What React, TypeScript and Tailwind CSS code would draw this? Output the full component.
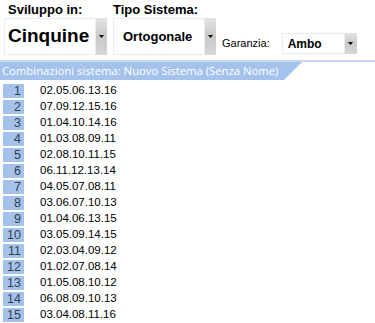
const combos = [
  '02.05.06.13.16',
  '07.09.12.15.16',
  '01.04.10.14.16',
  '01.03.08.09.11',
  '02.08.10.11.15',
  '06.11.12.13.14',
  '04.05.07.08.11',
  '03.06.07.10.13',
  '01.04.06.13.15',
  '03.05.09.14.15',
  '02.03.04.09.12',
  '01.02.07.08.14',
  '01.05.08.10.12',
  '06.08.09.10.13',
  '03.04.08.11.16',
]

function DropButton({ className }: { className: string }) {
  return (
    <div
      className={`flex items-center justify-center bg-gradient-to-b from-[#e4e4e4] via-[#c9c9c9] to-[#d6d6d6] ${className}`}
    >
      <svg width="5" height="3" viewBox="0 0 5 3">
        <path d="M0 0h5L2.5 3z" fill="#000" />
      </svg>
    </div>
  )
}

export default function App() {
  return (
    <div className="h-[323px] w-[375px] overflow-hidden bg-white font-['Liberation_Sans',Arial,sans-serif] text-black">
      <div className="flex h-[60px] pt-[1px]">
        <div className="flex w-[113px] flex-col">
          <div className="h-[17px] pl-[8px] text-[13px] font-bold leading-[17px]">Sviluppo in:</div>
          <div className="flex h-[37px] pl-[4px]">
            <div className="flex w-[92px] items-center border border-[#ececec] pl-[3px] text-[19px] font-bold">
              Cinquine
            </div>
            <DropButton className="w-[11px]" />
          </div>
        </div>
        <div className="flex w-[106px] flex-col">
          <div className="h-[17px] text-[13px] font-bold leading-[17px]">Tipo Sistema:</div>
          <div className="flex h-[37px]">
            <div className="flex w-[92px] items-center border border-[#ececec] pl-[9px] text-[13px] font-bold">
              Ortogonale
            </div>
            <DropButton className="w-[11px]" />
          </div>
        </div>
        <div className="flex items-end pb-[6px]">
          <div className="flex h-[21px] items-center pl-[3px] text-[11px]">Garanzia:</div>
          <div className="ml-[12px] flex h-[21px] w-[63px] items-center border border-[#ececec] pl-[5px] text-[12px] font-bold">
            Ambo
          </div>
          <DropButton className="h-[21px] w-[12px]" />
        </div>
      </div>
      <div className="h-[2px] bg-[#c6d8f0]" />
      <div className="relative h-[18px] w-[302px] bg-[#a4c2ec] [clip-path:polygon(0_0,100%_0,calc(100%-18px)_100%,0_100%)]">
        <div className="pl-[2px] font-['Open_Sans',sans-serif] text-[11.3px] leading-[18px] text-white">
          Combinazioni sistema: Nuovo Sistema (Senza Nome)
        </div>
      </div>
      <div className="flex flex-col pt-[3px]">
        {combos.map((c, i) => (
          <div key={c} className="flex h-[16px] items-center">
            <div className="ml-[3px] flex h-[14px] w-[21px] items-center justify-end bg-[#a4c2ec] pr-[3px] text-[12.5px] text-[#34404c]">
              {i + 1}
            </div>
            <div className="ml-[16px] text-[11.5px]">{c}</div>
          </div>
        ))}
      </div>
    </div>
  )
}
